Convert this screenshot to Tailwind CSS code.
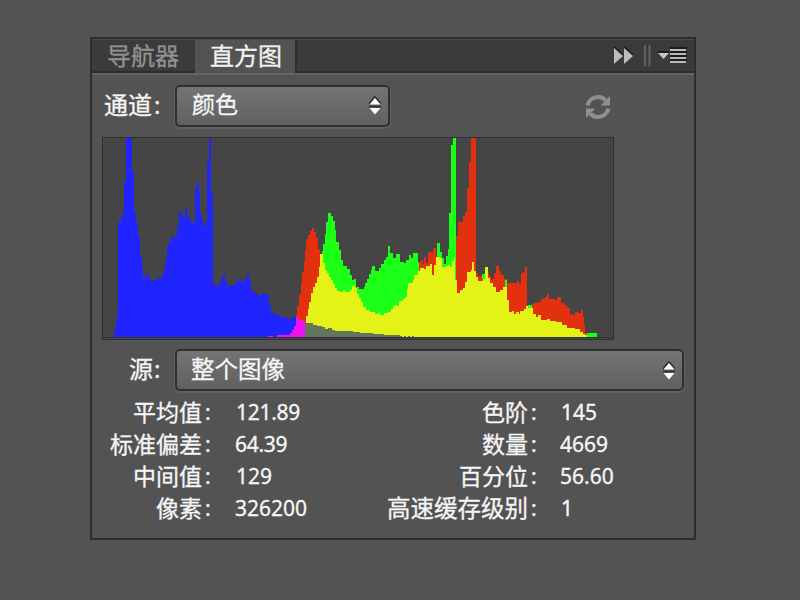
<!DOCTYPE html>
<html lang="zh-CN">
<head>
<meta charset="utf-8">
<title>直方图</title>
<script src="https://cdn.jsdelivr.net/npm/@tailwindcss/browser@4"></script>
</head>
<body class="w-[800px] h-[600px] overflow-hidden bg-[#535353] pl-[90px] pt-[37px] text-[#f6f6f6] font-['Noto_Sans','Noto_Sans_CJK_SC',sans-serif] [-webkit-text-stroke:0.3px]">
<main class="w-[606px] h-[503px] border-2 border-[#2d2d2d] bg-[#535353] flex flex-col">
  <header class="h-[34px] shrink-0 flex bg-[#3b3b3b] border-t border-[#4a4a4a] text-[24px] leading-[29px] font-['Noto_Sans_CJK_SC',sans-serif]">
    <div class="w-[103px] pl-[15px] border-b-2 border-[#2d2d2d] text-[#929292] whitespace-nowrap">导航器</div>
    <div class="w-[100px] pl-[15px] bg-[#535353] text-[#f2f2f2] whitespace-nowrap">直方图</div>
    <div class="flex-1 border-l-2 border-b-2 border-[#2d2d2d]">
      <svg class="block ml-[312px]" width="82" height="31" viewBox="609 40 82 31">
        <path d="M614 47l9 8M624 47l9 8" stroke="#1f1f1f" stroke-width="2"/>
        <path d="M614 48l9 8-9 8zM624 48l9 8-9 8z" fill="#bdbdbd"/>
        <path d="M645 45v21M649.500 45v21" stroke="#626262" stroke-width="2"/>
        <path d="M658 52h11M670 48h17M670 52h17M670 56h17M670 60h17" stroke="#1c1c1c" stroke-width="2"/>
        <path d="M658 53h11l-5.500 6z" fill="#c5c5c5"/>
        <path d="M670 50h16M670 54h16M670 58h16M670 62h16" stroke="#b9b9b9" stroke-width="2"/>
      </svg>
    </div>
  </header>

  <section class="h-[64px] shrink-0 border-t-2 border-[#636363] flex items-start">
    <div class="w-[83px] pl-[12px] pt-[13px] text-[24px] leading-[33px] flex"><span class="w-[48px] whitespace-nowrap">通道</span><span class="pl-[2px]">:</span></div>
    <div class="mt-[10px] w-[215px] h-[42px] rounded-[5px] border-2 border-[#303030] bg-linear-to-b from-[#747474] to-[#606060] shadow-[0_1px_0_1px_#606060] flex justify-between pl-[15px] pr-[7px] text-[23px] leading-[35px]">
      <span>颜色</span>
      <svg class="mt-[9px]" width="12" height="20" viewBox="0 0 12 20"><path d="M0 8l6-7 6 7M0 10.500h12" fill="none" stroke="#333" stroke-width="2"/><path d="M6 2l5.500 6.500H.5zM.5 12h11L6 18.500z" fill="#fff"/></svg>
    </div>
    <svg class="ml-[194px] mt-[18px]" width="28" height="28" viewBox="0 0 28 28" fill="none" stroke="#8f8f8f" stroke-width="4"><path d="M3.500 12.500C5 6.500 10 4 14.500 4c3 0 5.500 1.500 7 3.500M24.500 15.500C23 21.500 18 24 13.500 24c-3 0-5.500-1.500-7-3.500"/><path d="M26 3v9.500h-9.500zM2 25v-9.500h9.500z" fill="#8f8f8f" stroke="none"/></svg>
  </section>

  <div class="ml-[10px] w-[512px] h-[203px] shrink-0 border border-[#303030] bg-[#454545]">
    <svg class="block" width="510" height="201" viewBox="103 138 510 201" shape-rendering="crispEdges" aria-label="histogram">
      <path fill="#2024ff" data-bins="113,335 114,333 115,327 116,320 117,312 118,222 121,216 123,211 124,182 126,138 132,172 134,213 136,223 138,236 140,256 142,265 143,277 145,279 146,274 149,279 151,282 153,280 156,277 158,279 161,276 163,273 164,266 166,257 167,247 168,243 171,237 173,235 174,238 176,236 177,226 179,211 181,215 183,218 185,208 187,215 189,220 191,223 195,188 197,182 199,193 200,214 202,222 204,226 206,221 207,162 209,138 211,193 213,285 220,283 221,278 223,274 225,281 227,286 231,285 235,283 237,277 238,281 241,282 243,279 247,273 249,281 251,290 253,292 255,293 257,295 259,296 261,294 268,295 269,305 271,313 275,314 277,316 279,315 281,317 287,319 292,317 297,337"/>
      <path fill="#e3300f" data-bins="296,315 297,306 299,294 301,283 302,272 304,262 305,250 306,239 308,235 310,231 312,228 314,232 316,238 318,249 320,262 323,337"/>
      <path fill="#1cff16" data-bins="322,251 323,244 325,234 326,222 328,213 331,216 333,221 335,230 336,242 339,250 341,260 343,266 347,269 350,275 352,280 354,279 356,287 359,289 364,287 365,283 367,279 369,274 371,270 372,266 375,271 379,268 381,264 384,260 386,257 388,246 390,253 393,258 396,254 400,262 404,263 406,260 409,255 411,258 413,253 418,262 421,337"/>
      <path fill="#e3300f" data-bins="419,262 421,260 423,264 424,257 426,263 428,252 431,253 433,248 436,257 437,337"/>
      <path fill="#1cff16" data-bins="437,243 440,252 442,258 444,264 446,256 448,249 449,213 451,145 453,138 456,337"/>
      <path fill="#e3300f" data-bins="456,236 458,222 463,216 465,212 467,188 469,162 471,138 476,273 478,276 482,279 483,274 486,271 489,276 491,279 494,273 496,266 499,271 501,275 504,279 507,283 517,281 519,284 521,273 523,272 525,267 527,305 532,304 534,303 538,302 541,299 545,297 547,294 549,299 555,300 557,297 561,303 564,305 567,308 570,314 573,315 575,312 578,313 581,310 583,317 584,325 585,333 587,337"/>
      <path fill="#e4f216" data-bins="305,323 306,316 308,309 309,302 311,293 313,287 315,283 317,277 319,267 320,254 323,263 325,270 327,273 329,277 331,280 333,284 335,288 337,291 340,292 343,290 345,292 350,290 352,286 355,288 357,294 359,298 361,302 363,307 366,310 370,312 375,314 378,313 380,315 384,313 388,312 391,309 393,306 395,305 397,306 399,301 403,299 405,297 407,289 408,283 413,280 414,275 418,271 420,268 424,269 426,266 430,264 432,275 434,265 436,257 440,258 442,267 446,266 448,265 450,267 452,261 454,258 455,280 457,293 460,290 463,288 465,282 467,272 471,270 472,262 474,271 476,277 478,281 483,279 485,267 488,278 490,283 493,287 496,292 500,290 503,287 505,283 507,300 509,312 512,311 514,314 516,312 519,314 520,311 524,309 526,306 532,308 533,314 536,317 538,315 541,320 547,319 550,321 556,322 562,325 567,328 575,329 580,332 583,334 585,335 587,337"/>
      <path fill="#1cff16" d="M482 274h3v5h-3zM505 280h2v7h-2zM528 305h4v3h-4zM587 333h10v4h-10z"/>
      <path fill="#62755f" data-bins="305,323 313,325 317,326 322,327 325,329 328,328 332,330 335,331 353,332 360,333 373,334 384,335 400,336 402,337 404,336 406,337 408,336 410,337 412,336 414,337 416,337"/>
      <path fill="#ef12ef" data-bins="268,336 273,337 277,335 290,333 292,330 294,326 296,318 299,320 301,321 303,320 305,337"/>
      <path fill="#343434" d="M103 337h511v1H103z"/>
    </svg>
  </div>

  <section class="h-[60px] shrink-0 flex items-start">
    <div class="w-[83px] pl-[37px] pt-[12px] text-[24px] leading-[33px] flex"><span class="w-[23px]">源</span><span class="pl-[2px]">:</span></div>
    <div class="mt-[9px] w-[509px] h-[42px] rounded-[5px] border-2 border-[#303030] bg-linear-to-b from-[#747474] to-[#606060] shadow-[0_1px_0_1px_#606060] flex justify-between pl-[14px] pr-[7px] text-[23.500px] leading-[36px]">
      <span>整个图像</span>
      <svg class="mt-[10px]" width="12" height="20" viewBox="0 0 12 20"><path d="M0 8l6-7 6 7M0 10.500h12" fill="none" stroke="#333" stroke-width="2"/><path d="M6 2l5.500 6.500H.5zM.5 12h11L6 18.500z" fill="#fff"/></svg>
    </div>
  </section>

  <section class="grid grid-cols-[110px_33px_151px_142px_32px_1fr] auto-rows-[32px] text-[21px] leading-[24px] whitespace-nowrap">
    <span class="text-right text-[23px]">平均值</span><span class="pl-[3px]">:</span><span class="pl-px tracking-[-0.3px]">121.89</span>
    <span class="text-right text-[23px]">色阶</span><span class="pl-[3px]">:</span><span class="pl-px">145</span>
    <span class="text-right text-[23px]">标准偏差</span><span class="pl-[3px]">:</span><span class="tracking-[-0.3px]">64.39</span>
    <span class="text-right text-[23px]">数量</span><span class="pl-[3px]">:</span><span>4669</span>
    <span class="text-right text-[23px]">中间值</span><span class="pl-[3px]">:</span><span class="pl-px">129</span>
    <span class="text-right text-[23px]">百分位</span><span class="pl-[3px]">:</span><span>56.60</span>
    <span class="text-right text-[23px]">像素</span><span class="pl-[3px]">:</span><span>326200</span>
    <span class="text-right text-[23.500px]">高速缓存级别</span><span class="pl-[3px]">:</span><span class="pl-px">1</span>
  </section>
</main>
<script>
// Expand "x,top" bins into stepped areas that stand on the baseline.
const BASE = 337;
document.querySelectorAll('[data-bins]').forEach(p => {
  const b = p.dataset.bins.split(' ').map(s => s.split(',').map(Number));
  let d = `M${b[0][0]} ${BASE}`;
  b.forEach(([x, y]) => { d += `H${x}V${y}`; });
  p.setAttribute('d', d + `V${BASE}Z`);
});
</script>
</body>
</html>
